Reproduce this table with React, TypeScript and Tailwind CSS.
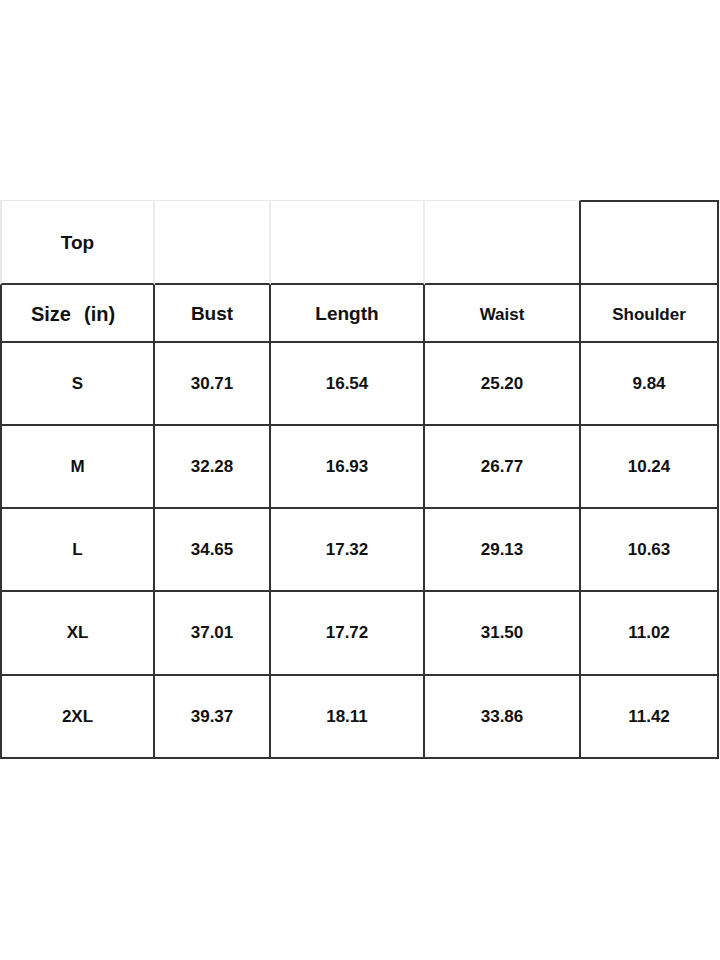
import React from "react";

const widths = ["w-[155px]", "w-[116px]", "w-[154px]", "w-[156px]", "w-[138px]"];

const data = [
  ["S", "30.71", "16.54", "25.20", "9.84"],
  ["M", "32.28", "16.93", "26.77", "10.24"],
  ["L", "34.65", "17.32", "29.13", "10.63"],
  ["XL", "37.01", "17.72", "31.50", "11.02"],
  ["2XL", "39.37", "18.11", "33.86", "11.42"],
];
const rowHeights = ["h-[83px]", "h-[83px]", "h-[83px]", "h-[84px]", "h-[83px]"];

export default function App() {
  return (
    <div
      className="w-[720px] h-[960px] bg-white text-[#111]"
      style={{ fontFamily: '"Liberation Sans", Arial, sans-serif' }}
    >
      <div className="pt-[200px] flex flex-col w-[719px]">
        {/* Top row */}
        <div className="flex h-[85px]">
          <div className={`${widths[0]} border-l-2 border-t border-r-2 border-b-2 border-l-[#e8e8e8] border-t-[#e8e8e8] border-r-[#ececec] border-b-[#333] flex items-center justify-center pt-[3px] text-[19px] font-bold`}>
            Top
          </div>
          <div className={`${widths[1]} border-t border-r-2 border-b-2 border-t-[#e8e8e8] border-r-[#ececec] border-b-[#333]`} />
          <div className={`${widths[2]} border-t border-r-2 border-b-2 border-t-[#e8e8e8] border-r-[#ececec] border-b-[#333]`} />
          <div className={`${widths[3]} border-t border-r-2 border-b-2 border-t-[#e8e8e8] border-r-[#333] border-b-[#333]`} />
          <div className={`${widths[4]} border-t-2 border-r-2 border-b-2 border-[#333]`} />
        </div>
        {/* Header row */}
        <div className="flex h-[58px]">
          <div className={`${widths[0]} border-l-2 border-r-2 border-b-2 border-[#333] flex items-center justify-center pt-[2px] pr-[9px] text-[20px] font-bold`}>
            <div className="flex items-baseline gap-[13px] leading-none">
              <span>Size</span>
              <span>(in)</span>
            </div>
          </div>
          <div className={`${widths[1]} border-r-2 border-b-2 border-[#333] flex items-center justify-center pt-[3px] text-[19px] font-bold`}>
            Bust
          </div>
          <div className={`${widths[2]} border-r-2 border-b-2 border-[#333] flex items-center justify-center pt-[3px] text-[19px] font-bold`}>
            Length
          </div>
          <div className={`${widths[3]} border-r-2 border-b-2 border-[#333] flex items-center justify-center pt-[3px] text-[17px] font-bold`}>
            Waist
          </div>
          <div className={`${widths[4]} border-r-2 border-b-2 border-[#333] flex items-center justify-center pt-[3px] text-[17px] font-bold`}>
            Shoulder
          </div>
        </div>
        {data.map((row, ri) => (
          <div key={ri} className={`flex ${rowHeights[ri]}`}>
            {row.map((cell, ci) => (
              <div
                key={ci}
                className={`${widths[ci]} ${ci === 0 ? "border-l-2" : ""} border-r-2 border-b-2 border-[#333] flex items-center justify-center text-[17px] font-bold`}
              >
                {cell}
              </div>
            ))}
          </div>
        ))}
      </div>
    </div>
  );
}
